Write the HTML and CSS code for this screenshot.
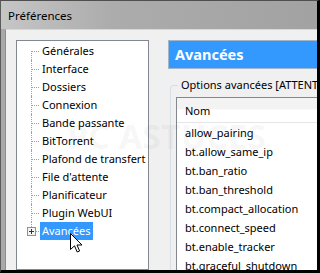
FILE: index.html
```html
<!DOCTYPE html>
<html lang="fr">
<head>
  <meta charset="UTF-8">
  <title>Préférences</title>
  <link rel="stylesheet" href="styles.css">
</head>
<body>
  <div class="window">
    <div class="titlebar">Préférences</div>
    <div class="frame">
      <div class="client">
        <!-- arbre des categories -->
        <div class="tree">
          <ul class="tree-list">
            <li class="node first"><span class="label">Générales</span></li>
            <li class="node"><span class="label">Interface</span></li>
            <li class="node"><span class="label">Dossiers</span></li>
            <li class="node"><span class="label">Connexion</span></li>
            <li class="node"><span class="label">Bande passante</span></li>
            <li class="node"><span class="label">BitTorrent</span></li>
            <li class="node"><span class="label">Plafond de transfert</span></li>
            <li class="node"><span class="label">File d'attente</span></li>
            <li class="node"><span class="label">Planificateur</span></li>
            <li class="node"><span class="label">Plugin WebUI</span></li>
            <li class="node last">
              <span class="expander">
                <svg width="9" height="9" viewBox="0 0 9 9">
                  <rect x="0.5" y="0.5" width="8" height="8" fill="#f4f4f4" stroke="#919191"/>
                  <path d="M2 4.5h5M4.5 2v5" stroke="#1e395b" stroke-width="1"/>
                </svg>
              </span>
              <span class="label selected">Avancées</span>
            </li>
          </ul>
        </div>

        <!-- page de droite -->
        <div class="page">
          <div class="page-header">Avancées</div>
          <fieldset class="group">
            <legend>Options avancées [ATTENTION : modifier ces options peut être dangereux]</legend>
            <div class="listview">
              <div class="lv-header">Nom</div>
              <div class="lv-row">allow_pairing</div>
              <div class="lv-row">bt.allow_same_ip</div>
              <div class="lv-row">bt.ban_ratio</div>
              <div class="lv-row">bt.ban_threshold</div>
              <div class="lv-row">bt.compact_allocation</div>
              <div class="lv-row">bt.connect_speed</div>
              <div class="lv-row">bt.enable_tracker</div>
              <div class="lv-row">bt.graceful_shutdown</div>
            </div>
          </fieldset>
        </div>
      </div>
    </div>

    <div class="watermark">PC ASTUCES</div>

    <svg class="cursor" width="13" height="20" viewBox="0 0 13 20">
      <path d="M0.5 0.5 L0.5 16.5 L4.5 12.8 L7.2 19 L9.6 18 L7 12 L12 12 Z" fill="#fff" stroke="#000" stroke-width="1" stroke-linejoin="miter"/>
    </svg>
  </div>
</body>
</html>
```

FILE: styles.css
```css
/* fenetre style Windows 7 */
* {
  margin: 0;
  padding: 0;
  box-sizing: border-box;
}

body {
  font-family: 'Noto Sans', sans-serif;
  font-size: 11px;
  color: #000;
  overflow: hidden;
  background: #000;
}

.window {
  position: relative;
  width: 320px;
  height: 273px;
  overflow: hidden;
  display: flex;
  flex-direction: column;
  border-top: 1px solid #4f4f4f;
  border-left: 1px solid #5a5a5a;
  border-right: 3px solid #000;
  border-bottom: 3px solid #000;
  background: #a8a8a8;
}

.titlebar {
  height: 28px;
  line-height: 29px;
  padding-left: 7px;
  background: linear-gradient(90deg, #c6c6c6 0%, #acacac 35%, #a2a2a2 100%);
  color: #000;
  font-size: 11.5px;
  white-space: nowrap;
}

.frame {
  flex: 1;
  display: flex;
  padding-left: 4px;
  min-height: 0;
}

.client {
  flex: 1;
  display: flex;
  min-width: 0;
  background: #f0f0f0;
  border-left: 1px solid #8c8c8c;
  border-top: 1px solid #d8d8d8;
  padding: 10px 0 0 10px;
}

/* arbre */
.tree {
  width: 133px;
  flex-shrink: 0;
  background: #fff;
  border: 1px solid #828790;
  padding-top: 1px;
}

.tree-list {
  list-style: none;
}

.node {
  position: relative;
  height: 18px;
  line-height: 18px;
  padding-left: 23px;
  white-space: nowrap;
}

.node::before {
  content: "";
  position: absolute;
  left: 14px;
  top: 9px;
  width: 8px;
  border-top: 1px dotted #a0a0a0;
}

.node::after {
  content: "";
  position: absolute;
  left: 14px;
  top: 0;
  bottom: 0;
  border-left: 1px dotted #a0a0a0;
}

.node.first::after {
  top: 9px;
}

.node.last::after {
  bottom: 9px;
}

.expander {
  position: absolute;
  left: 10px;
  top: 5px;
  width: 9px;
  height: 9px;
  z-index: 1;
}

.expander svg {
  display: block;
}

.label {
  display: inline-block;
  height: 18px;
  padding: 0 2px;
}

.label.selected {
  background: #3399ff;
  color: #fff;
}

/* page */
.page {
  flex-shrink: 0;
  width: 300px;
  margin-left: 19px;
}

.page-header {
  height: 29px;
  line-height: 27px;
  padding-left: 6px;
  background: #3399ff;
  border: 1px solid #9fb6cc;
  color: #fff;
  font-size: 14.5px;
  font-weight: bold;
}

.group {
  margin: 8px 0 0 2px;
  padding: 0 0 0 5px;
  border: 1px solid #d5dfe5;
  border-radius: 3px;
}

.group legend {
  margin-left: 2px;
  padding: 0 3px;
  line-height: 16px;
  white-space: nowrap;
}

.listview {
  margin-top: 4px;
  background: #fff;
  border: 1px solid #828790;
}

.lv-header {
  height: 25px;
  line-height: 25px;
  padding-left: 8px;
  background: linear-gradient(#f3f3f3 0%, #f3f3f3 45%, #fff 50%, #fff 100%);
  border-bottom: 1px solid #e5e5e5;
}

.lv-row {
  height: 19px;
  line-height: 19px;
  padding-left: 8px;
  white-space: nowrap;
}

/* filigrane du site */
.watermark {
  position: absolute;
  left: 66px;
  top: 112px;
  font-size: 34px;
  font-weight: bold;
  color: rgba(0, 0, 0, 0.05);
  white-space: nowrap;
  pointer-events: none;
}

.cursor {
  position: absolute;
  left: 69px;
  top: 232px;
}
```
